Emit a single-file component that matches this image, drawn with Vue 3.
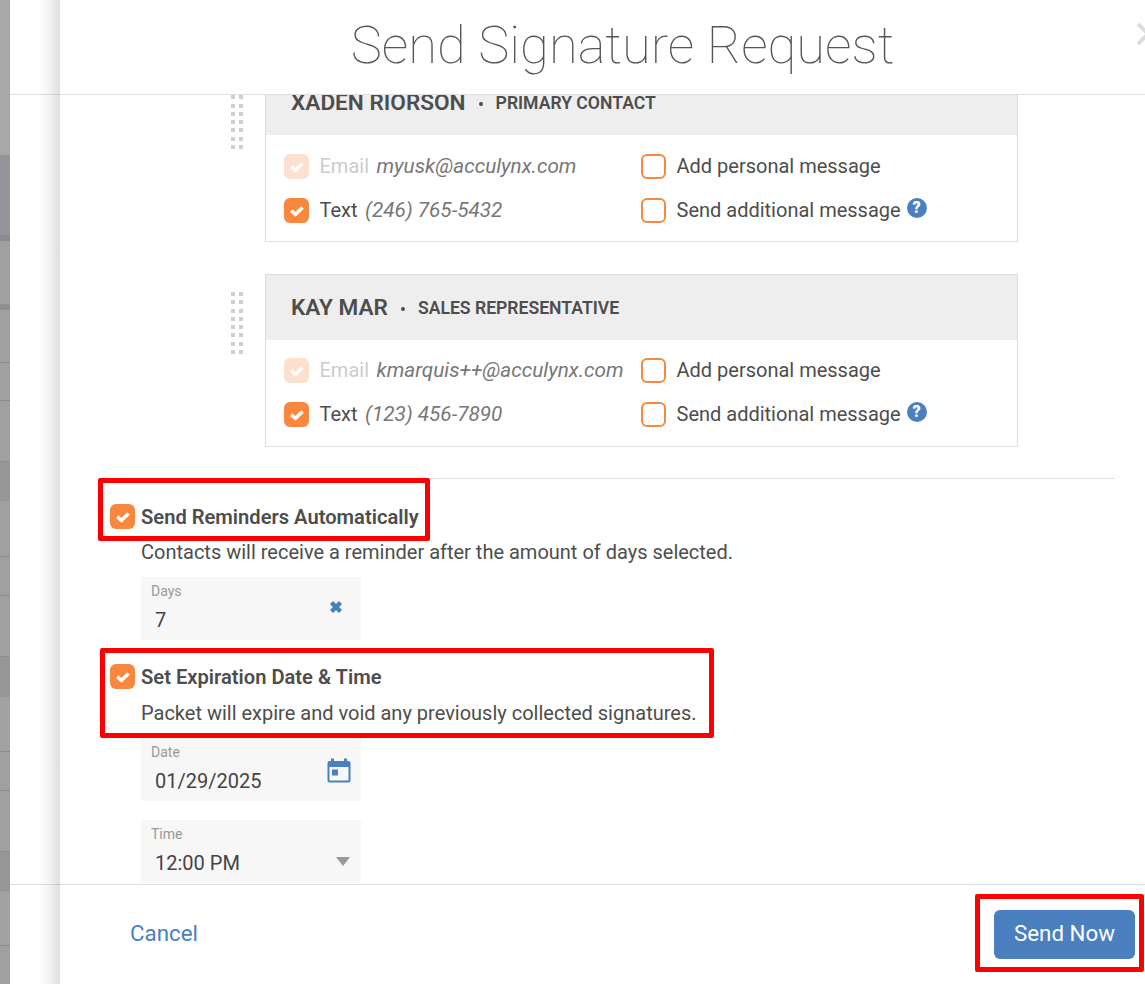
<script setup>
const contacts = [
  { name: 'XADEN RIORSON', role: 'PRIMARY CONTACT', email: 'myusk@acculynx.com', phone: '(246) 765-5432' },
  { name: 'KAY MAR', role: 'SALES REPRESENTATIVE', email: 'kmarquis++@acculynx.com', phone: '(123) 456-7890' },
]
const dots = 16
</script>

<template>
  <div class="page">
    <div class="strip"></div>
    <div class="panel">
      <header class="head">
        <h1>Send Signature Request</h1>
        <svg class="close" width="24" height="24" viewBox="0 0 24 24"><path d="M2 2 L22 22 M22 2 L2 22" stroke="#ddd" stroke-width="4" fill="none" /></svg>
      </header>

      <main class="body">
        <div class="scroll">
          <div v-for="c in contacts" :key="c.name" class="contact">
            <div class="grip"><i v-for="n in dots" :key="n"></i></div>
            <section class="card">
              <div class="card-head">
                <span class="name">{{ c.name }}</span>
                <span class="sep"></span>
                <span class="role">{{ c.role }}</span>
              </div>
              <div class="card-body">
                <div class="row">
                  <span class="cb on faded"><svg viewBox="0 0 25 25"><path d="M7.200 12.600 L11.500 16.300 L18.500 9.500" /></svg></span>
                  <span class="lbl muted">Email</span>
                  <em class="val">{{ c.email }}</em>
                </div>
                <div class="row">
                  <span class="cb"></span>
                  <span class="lbl">Add personal message</span>
                </div>
                <div class="row">
                  <span class="cb on"><svg viewBox="0 0 25 25"><path d="M7.200 12.600 L11.500 16.300 L18.500 9.500" /></svg></span>
                  <span class="lbl">Text</span>
                  <em class="val">{{ c.phone }}</em>
                </div>
                <div class="row">
                  <span class="cb"></span>
                  <span class="lbl">Send additional message</span>
                  <span class="help">?</span>
                </div>
              </div>
            </section>
          </div>

          <hr class="rule" />

          <div class="opt first">
            <span class="cb on"><svg viewBox="0 0 25 25"><path d="M7.200 12.600 L11.500 16.300 L18.500 9.500" /></svg></span>
            <strong>Send Reminders Automatically</strong>
          </div>
          <p class="desc">Contacts will receive a reminder after the amount of days selected.</p>
          <div class="field">
            <label>Days</label>
            <span class="value">7</span>
            <svg class="ficon x" width="14" height="14" viewBox="0 0 14 14"><path d="M2.500 2.500 L11.500 11.500 M11.500 2.500 L2.500 11.500" stroke="#4a80bf" stroke-width="4.500" fill="none" /></svg>
          </div>

          <div class="opt second">
            <span class="cb on"><svg viewBox="0 0 25 25"><path d="M7.200 12.600 L11.500 16.300 L18.500 9.500" /></svg></span>
            <strong>Set Expiration Date &amp; Time</strong>
          </div>
          <p class="desc d2">Packet will expire and void any previously collected signatures.</p>
          <div class="field">
            <label>Date</label>
            <span class="value">01/29/2025</span>
            <svg class="ficon cal" width="24" height="25" viewBox="0 0 24 25"><path fill="#4a80bf" fill-rule="evenodd" d="M4 0.500h3v2.500h10v-2.500h3v2.500h1.500a2 2 0 0 1 2 2v17.500a2 2 0 0 1-2 2h-19a2 2 0 0 1-2-2v-17.500a2 2 0 0 1 2-2h1.500zM2.500 9v13.500h19v-13.500zM5 11.500h6v6h-6z" /></svg>
          </div>
          <div class="field time">
            <label>Time</label>
            <span class="value">12:00 PM</span>
            <span class="caret"></span>
          </div>
        </div>
      </main>

      <footer class="foot">
        <a class="cancel">Cancel</a>
        <button class="send">Send Now</button>
      </footer>
    </div>

    <div class="mark m1"></div>
    <div class="mark m2"></div>
    <div class="mark m3"></div>
  </div>
</template>

<style>
html, body { margin: 0; overflow: hidden; }
</style>

<style scoped>
.page {
  position: relative;
  display: flex;
  width: 1145px;
  height: 984px;
  overflow: hidden;
  font-family: Roboto, "Liberation Sans", sans-serif;
  color: #4d4d4d;
  font-size: 20px;
}
.strip {
  width: 10px;
  flex: none;
  background: linear-gradient(180deg,
    #a8a8a8 0 155px, #94949a 155px 235px, #8c8c8c 235px 241px, #a0a0a0 241px 304px,
    #8f8f8f 304px 310px, #a0a0a0 310px 362px, #8c8c8c 362px 363px, #a0a0a0 363px 400px,
    #8c8c8c 400px 401px, #a0a0a0 401px 461px, #8c8c8c 461px 462px, #969696 462px 501px,
    #a0a0a0 501px 556px, #8c8c8c 556px 557px, #a0a0a0 557px 595px, #8c8c8c 595px 596px,
    #a0a0a0 596px 656px, #8c8c8c 656px 657px, #969696 657px 697px, #a2a2a2 697px 751px,
    #8c8c8c 751px 752px, #a0a0a0 752px 790px, #8c8c8c 790px 791px, #a0a0a0 791px 851px,
    #8c8c8c 851px 852px, #969696 852px 891px, #a2a2a2 891px 945px, #8c8c8c 945px 946px,
    #a0a0a0 946px 984px);
}
.panel {
  flex: 1;
  min-width: 0;
  display: flex;
  flex-direction: column;
  background: linear-gradient(90deg, #fff 0 28px, #f4f4f4 38px, #dedede 50px, #fff 50px);
}
.head {
  position: relative;
  flex: none;
  height: 94px;
  padding-left: 90px;
  border-bottom: 1px solid rgba(0, 0, 0, 0.12);
  text-align: center;
}
.head h1 {
  margin: 0;
  font-size: 52.500px;
  font-weight: 100;
  line-height: 90px;
  color: #555;
}
.close {
  position: absolute;
  top: 22px;
  left: 1126px;
}
.body {
  flex: 1;
  min-height: 0;
  overflow: hidden;
  padding-left: 100px;
}
.scroll {
  margin-top: -26px;
}
.contact {
  display: flex;
  align-items: flex-start;
  margin-bottom: 32px;
}
.grip {
  width: 12px;
  margin: 18px 0 0 121px;
  display: grid;
  grid-template-columns: 4px 4px;
  column-gap: 4px;
  row-gap: 4.300px;
}
.grip i {
  width: 4px;
  height: 4px;
  background: #cfcfcf;
}
.card {
  width: 751px;
  margin-left: 22px;
  border: 1px solid #ddd;
}
.card-head {
  height: 65px;
  display: flex;
  align-items: center;
  padding-left: 25px;
  background: #eee;
}
.name {
  font-size: 22.600px;
  font-weight: 600;
}
.sep {
  width: 4px;
  height: 4px;
  border-radius: 50%;
  background: #4d4d4d;
  margin: 2px 13px 0;
}
.role {
  font-size: 17.600px;
  font-weight: 600;
}
.card-body {
  display: grid;
  grid-template-columns: 357px 1fr;
  grid-auto-rows: 44px;
  padding: 9px 0 9px 18px;
}
.contact + .contact .card-body {
  padding: 8px 0 10px 18px;
}
.row {
  display: flex;
  align-items: center;
}
.cb {
  flex: none;
  box-sizing: border-box;
  width: 25px;
  height: 25px;
  border: 2.500px solid #f9873e;
  border-radius: 6px;
  background: #fff;
}
.cb.on {
  border: none;
  background: #f9873e;
}
.cb svg {
  display: block;
  width: 25px;
  height: 25px;
  fill: none;
  stroke: #fff;
  stroke-width: 3.600;
}
.faded {
  opacity: 0.25;
}
.lbl {
  margin-left: 10.500px;
  white-space: nowrap;
}
.muted {
  color: #ccc;
}
.val {
  margin-left: 7.500px;
  font-size: 20.700px;
  color: #777;
  white-space: nowrap;
}
.help {
  width: 20px;
  height: 20px;
  margin: -4px 0 0 6px;
  border-radius: 50%;
  background: #4a80bf;
  color: #fff;
  font-size: 16px;
  font-weight: 900;
  line-height: 20px;
  text-align: center;
}
.rule {
  width: 1004px;
  height: 1px;
  margin: -1px 0 0;
  border: none;
  background: #ddd;
}
.opt {
  display: flex;
  align-items: center;
}
.opt strong {
  margin-left: 6px;
  font-size: 20.150px;
  font-weight: 600;
}
.opt.first { margin-top: 25px; }
.opt.second { margin-top: 24px; }
.desc {
  margin: 11px 0 0 31px;
  line-height: 24px;
}
.d2 { margin-top: 12px; }
.field {
  position: relative;
  width: 220px;
  height: 63px;
  margin: 13px 0 0 31px;
  background: #f7f7f7;
}
.field label {
  position: absolute;
  top: 6px;
  left: 10px;
  font-size: 14px;
  color: #999;
}
.value {
  position: absolute;
  top: 31px;
  left: 14px;
  color: #444;
}
.ficon {
  position: absolute;
}
.x { top: 23px; right: 18px; }
.cal { top: 20px; right: 10px; }
.field.time { margin-top: 19px; }
.caret {
  position: absolute;
  top: 37px;
  right: 11px;
  border-style: solid;
  border-width: 9px 7px 0;
  border-color: #999 transparent transparent;
}
.foot {
  flex: none;
  box-sizing: border-box;
  height: 100px;
  padding: 25px 10px 25px 120px;
  border-top: 1px solid rgba(0, 0, 0, 0.12);
  display: flex;
  align-items: center;
  justify-content: space-between;
}
.cancel {
  margin-bottom: 4px;
  font-size: 22.300px;
  color: #4a80bf;
}
.send {
  width: 141px;
  height: 49px;
  padding: 0 0 3px;
  border: none;
  border-radius: 6px;
  background: #4a80bf;
  color: #fff;
  font: 400 22.300px Roboto, "Liberation Sans", sans-serif;
}
.mark {
  position: absolute;
  box-sizing: border-box;
  border: 5px solid #f00;
  border-radius: 2px;
}
.m1 { left: 98px; top: 478px; width: 332px; height: 63px; }
.m2 { left: 100px; top: 648px; width: 614px; height: 90px; }
.m3 { left: 975px; top: 894px; width: 169px; height: 78px; }
</style>
